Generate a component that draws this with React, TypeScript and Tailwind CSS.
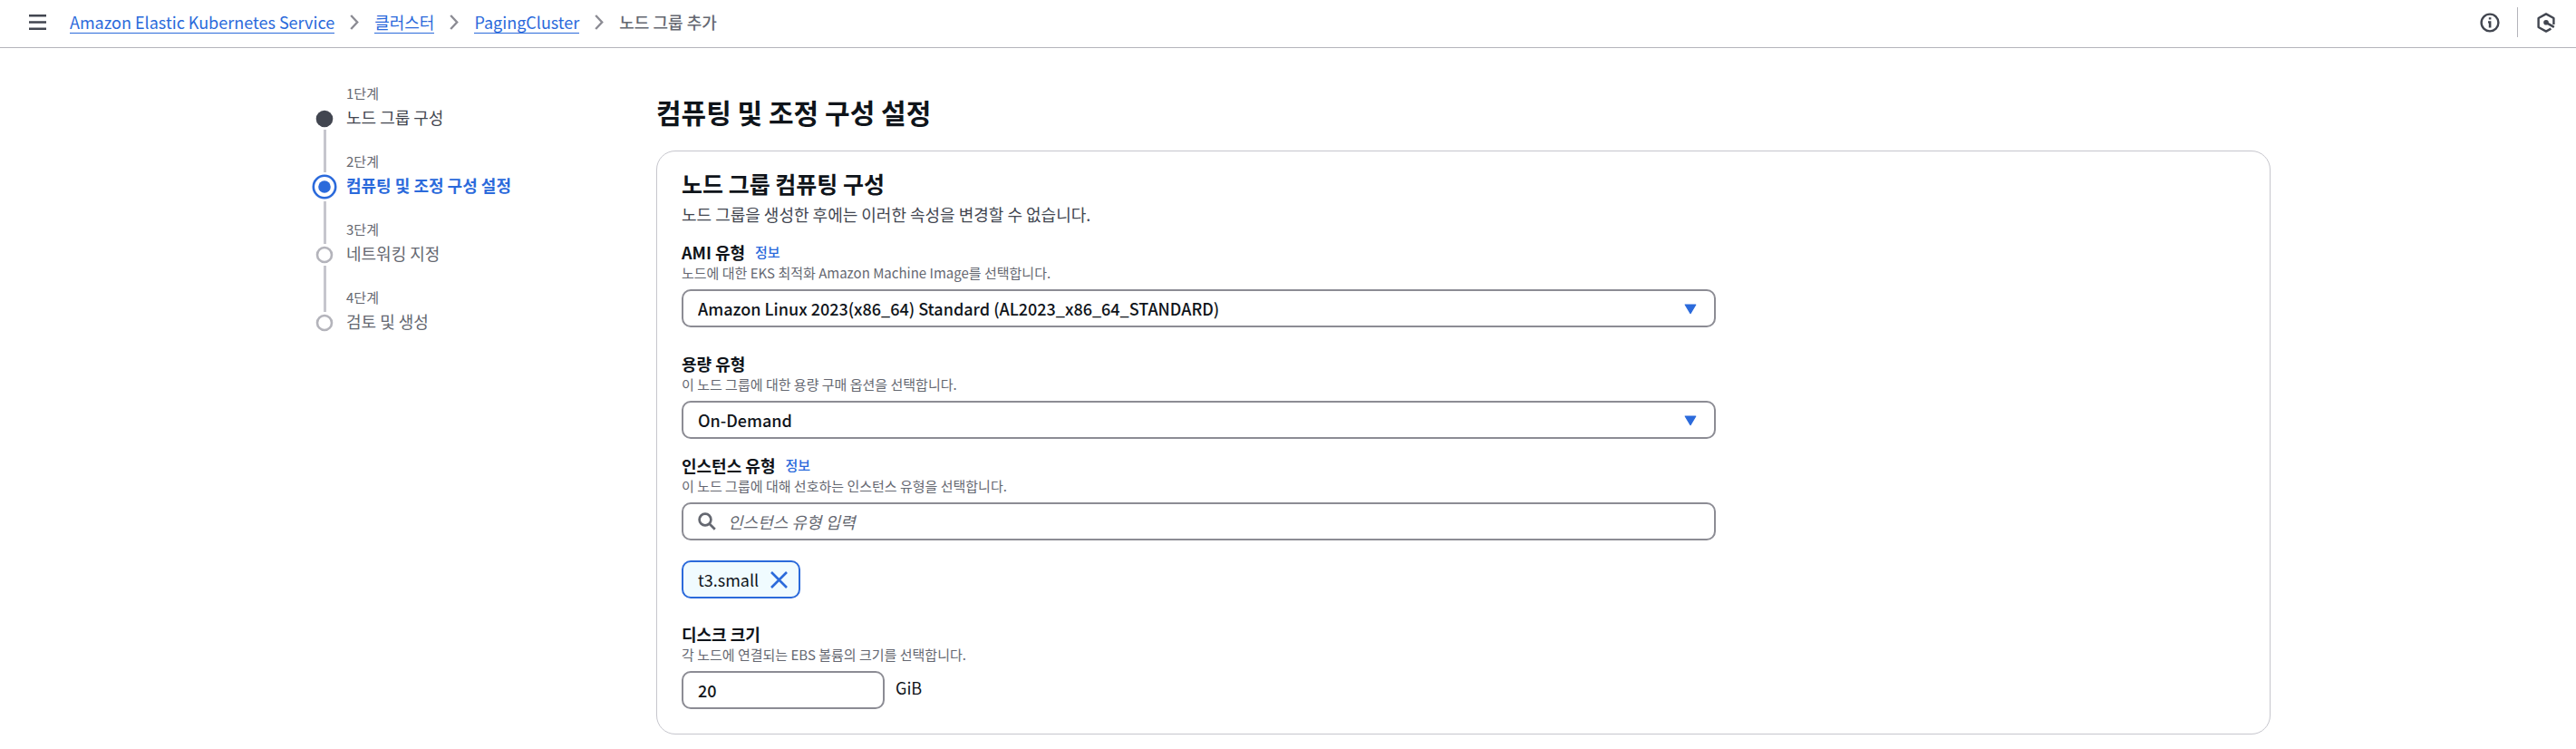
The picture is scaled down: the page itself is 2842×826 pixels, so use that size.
import { Fragment, type ReactNode } from "react";

const crumbs = [
  { label: "Amazon Elastic Kubernetes Service", href: "#eks" },
  { label: "클러스터", href: "#clusters" },
  { label: "PagingCluster", href: "#paging-cluster" },
];

type StepState = "done" | "active" | "todo";

const steps: { label: string; title: string; state: StepState }[] = [
  { label: "1단계", title: "노드 그룹 구성", state: "done" },
  { label: "2단계", title: "컴퓨팅 및 조정 구성 설정", state: "active" },
  { label: "3단계", title: "네트워킹 지정", state: "todo" },
  { label: "4단계", title: "검토 및 생성", state: "todo" },
];

const titleStyles: Record<StepState, string> = {
  done: "text-[#424650]",
  active: "font-bold text-[#2b6adb]",
  todo: "text-[#656871]",
};

// The active marker is larger, so the line before it stops earlier
const lineStyles: Record<StepState, string> = {
  done: "-mt-0.5 -mb-6",
  active: "mt-0.5 -mb-7",
  todo: "-mt-0.5 -mb-7",
};

function ChevronIcon() {
  return (
    <svg width="10" height="17" viewBox="0 0 10 17" fill="none" stroke="#8c8c94" strokeWidth="2.4" aria-hidden="true">
      <path d="M1.2 1 8.2 8.5 1.2 16" />
    </svg>
  );
}

function StepMarker({ state }: { state: StepState }) {
  return (
    <svg width="28" height="28" viewBox="0 0 28 28" className="block shrink-0" aria-hidden="true">
      {state === "done" && <circle cx="14" cy="14" r="9.3" fill="#424650" />}
      {state === "active" && (
        <>
          <circle cx="14" cy="14" r="12.2" fill="none" stroke="#2b6adb" strokeWidth="2.6" />
          <circle cx="14" cy="14" r="6.8" fill="#2b6adb" />
        </>
      )}
      {state === "todo" && <circle cx="14" cy="14" r="8" fill="none" stroke="#b4b4bb" strokeWidth="2.6" />}
    </svg>
  );
}

function Header() {
  return (
    <header className="flex h-[53px] items-center justify-between border-b border-[#b4b4bb] pr-[22px] pb-[3px] pl-8">
      <div className="flex items-center">
        <button type="button" aria-label="메뉴" className="mr-[26px]">
          <svg width="19" height="17" viewBox="0 0 19 17" fill="#424650" className="block">
            <path d="M0 0h19v2.6H0zM0 7.2h19v2.6H0zM0 14.4h19V17H0z" />
          </svg>
        </button>
        <nav aria-label="이동 경로" className="flex items-center gap-[17px]">
          {crumbs.map((crumb) => (
            <Fragment key={crumb.href}>
              <a href={crumb.href} className="border-b border-[#2b6adb] leading-6 text-[#2b6adb]">
                {crumb.label}
              </a>
              <ChevronIcon />
            </Fragment>
          ))}
          <span className="font-medium text-[#656871]">노드 그룹 추가</span>
        </nav>
      </div>
      <div className="flex items-center">
        <button type="button" aria-label="정보">
          <svg width="22" height="22" viewBox="0 0 22 22" className="block">
            <circle cx="11" cy="11" r="9.4" fill="none" stroke="#424650" strokeWidth="2.4" />
            <path d="M9.8 5.2h2.6v2.4H9.8zM9 9.2h3.4v7.2H9.8v-5H9z" fill="#424650" />
          </svg>
        </button>
        <span className="mr-5 ml-[19px] h-[33px] w-px bg-[#b4b4bb]" />
        <button type="button" aria-label="Amazon Q">
          <svg width="22" height="22" viewBox="0 0 22 22" className="block">
            <path
              d="M19.4 13V6L11 1.4 2.6 6v10l8.4 4.6 5.4-3"
              fill="none"
              stroke="#424650"
              strokeWidth="2.4"
              strokeLinejoin="round"
            />
            <circle cx="11" cy="10.8" r="2.8" fill="#424650" />
            <path d="m11 10.8 8.8 5" stroke="#424650" strokeWidth="2.6" />
          </svg>
        </button>
      </div>
    </header>
  );
}

function StepNav() {
  return (
    <nav aria-label="단계" className="w-[387px] shrink-0 pt-[38px] pl-[7px]">
      <ol>
        {steps.map((step, i) => (
          <li key={step.label} className="flex h-[75px] gap-[10px]">
            <div className="flex flex-col items-center pt-[26px]">
              <StepMarker state={step.state} />
              {i < steps.length - 1 && <span className={`w-[3px] flex-1 bg-[#c6c6cd] ${lineStyles[step.state]}`} />}
            </div>
            <div>
              <div className="text-[15px] leading-6 text-[#656871]">{step.label}</div>
              <div className={`leading-7 ${titleStyles[step.state]}`}>{step.title}</div>
            </div>
          </li>
        ))}
      </ol>
    </nav>
  );
}

interface FieldProps {
  id: string;
  label: string;
  hint: string;
  info?: boolean;
  children: ReactNode;
}

function Field({ id, label, hint, info, children }: FieldProps) {
  return (
    <div className="max-w-[1141px]">
      <div className="flex items-center gap-[11px] leading-6">
        <label htmlFor={id} className="font-bold">
          {label}
        </label>
        {info && (
          <a href={`#${id}-info`} className="text-[15px] font-medium text-[#2b6adb]">
            정보
          </a>
        )}
      </div>
      <p id={`${id}-hint`} className="mb-[7px] text-[15px] leading-[22px] text-[#656871]">
        {hint}
      </p>
      {children}
    </div>
  );
}

function Select({ id, value }: { id: string; value: string }) {
  return (
    <div className="relative">
      <select
        id={id}
        aria-describedby={`${id}-hint`}
        className="block h-[42px] w-full appearance-none rounded-[10px] border-2 border-[#8c8c94] bg-white px-4 font-medium"
      >
        <option>{value}</option>
      </select>
      <svg
        width="14"
        height="12"
        viewBox="0 0 14 12"
        className="pointer-events-none absolute top-4 right-[21px]"
        aria-hidden="true"
      >
        <path d="M1.2 1h11.6L7 10.6z" fill="#2b6adb" stroke="#2b6adb" strokeWidth="1.2" strokeLinejoin="round" />
      </svg>
    </div>
  );
}

export default function App() {
  return (
    <div className="min-h-screen bg-white font-['Noto_Sans_CJK_KR',sans-serif] text-[18px] text-[#0f141a]">
      <Header />
      <div className="mx-auto flex max-w-[2168px] pb-4">
        <StepNav />
        <main className="min-w-0 flex-1 pt-[50px]">
          <h1 className="mb-[23px] text-[30px] leading-10 font-bold">컴퓨팅 및 조정 구성 설정</h1>
          <section className="rounded-[21px] border border-[#c6c6cd] px-[27px] pt-5 pb-[27px]">
            <h2 className="mb-[6px] text-[25px] leading-[30px] font-bold">노드 그룹 컴퓨팅 구성</h2>
            <p className="mb-[17px] leading-[26px] text-[#424650]">
              노드 그룹을 생성한 후에는 이러한 속성을 변경할 수 없습니다.
            </p>
            <form>
              <Field id="ami" label="AMI 유형" hint="노드에 대한 EKS 최적화 Amazon Machine Image를 선택합니다." info>
                <Select id="ami" value="Amazon Linux 2023(x86_64) Standard (AL2023_x86_64_STANDARD)" />
              </Field>
              <div className="mt-7 mb-[17px]">
                <Field id="capacity" label="용량 유형" hint="이 노드 그룹에 대한 용량 구매 옵션을 선택합니다.">
                  <Select id="capacity" value="On-Demand" />
                </Field>
              </div>
              <Field id="instance" label="인스턴스 유형" hint="이 노드 그룹에 대해 선호하는 인스턴스 유형을 선택합니다." info>
                <div className="flex h-[42px] items-center gap-[13px] rounded-[10px] border-2 border-[#8c8c94] px-4">
                  <svg width="20" height="20" viewBox="0 0 20 20" fill="none" stroke="#656871" strokeWidth="2.7" aria-hidden="true">
                    <circle cx="8" cy="8" r="6.4" />
                    <path d="m12.5 12.5 6.3 6.3" />
                  </svg>
                  <input
                    id="instance"
                    type="text"
                    aria-describedby="instance-hint"
                    placeholder="인스턴스 유형 입력"
                    className="min-w-0 flex-1 outline-none placeholder:text-[#656871] placeholder:italic"
                  />
                </div>
              </Field>
              <div className="mt-[22px] mb-[27px] flex">
                <span className="flex h-[42px] items-center gap-[13px] rounded-[10px] border-2 border-[#2b6adb] bg-[#f0fbff] pr-3 pl-4">
                  t3.small
                  <button type="button" aria-label="t3.small 제거">
                    <svg width="19" height="19" viewBox="0 0 19 19" stroke="#2b6adb" strokeWidth="2.6" className="block">
                      <path d="m1 1 17 17M18 1 1 18" />
                    </svg>
                  </button>
                </span>
              </div>
              <Field id="disk" label="디스크 크기" hint="각 노드에 연결되는 EBS 볼륨의 크기를 선택합니다.">
                <div className="flex gap-3">
                  <input
                    id="disk"
                    type="text"
                    inputMode="numeric"
                    defaultValue="20"
                    aria-describedby="disk-hint"
                    className="h-[42px] w-[224px] rounded-[10px] border-2 border-[#8c8c94] px-4 font-medium"
                  />
                  <span className="leading-9">GiB</span>
                </div>
              </Field>
            </form>
          </section>
        </main>
      </div>
    </div>
  );
}
